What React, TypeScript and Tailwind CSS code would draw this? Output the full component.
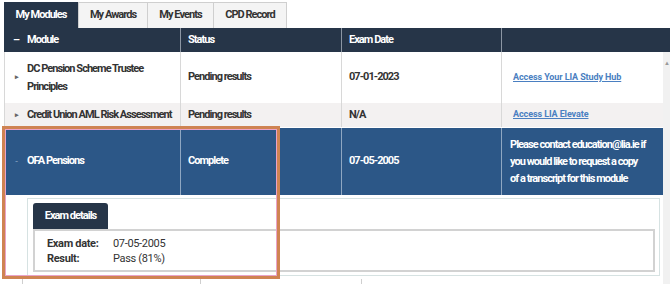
const font = { fontFamily: 'Roboto, "Liberation Sans", sans-serif' }

interface Row {
  module: string
  status: string
  date: string
  extra: string
}

const rows: Row[] = [
  { module: "DC Pension Scheme Trustee Principles", status: "Pending results", date: "07-01-2023", extra: "Access Your LIA Study Hub" },
  { module: "Credit Union AML Risk Assessment", status: "Pending results", date: "N/A", extra: "Access LIA Elevate" },
]

const App = () => {
  return (
    <div className="relative w-[670px] h-[284px] overflow-hidden bg-white text-[#333] tracking-[-0.06em]" style={font}>
      {/* tabs */}
      <div className="flex h-[28px] pt-[2px] pl-[4px] text-[11px] font-bold">
        <div className="w-[74px] bg-[#263548] text-white flex items-center justify-center">My Modules</div>
        <div className="w-[70px] bg-[#f4f4f4] border border-[#cfcfcf] border-b-0 flex items-center justify-center">My Awards</div>
        <div className="w-[66px] bg-[#f4f4f4] border border-[#cfcfcf] border-b-0 border-l-0 flex items-center justify-center">My Events</div>
        <div className="w-[73px] bg-[#f4f4f4] border border-[#cfcfcf] border-b-0 border-l-0 flex items-center justify-center">CPD Record</div>
      </div>

      {/* header */}
      <div className="flex h-[24px] ml-[4px] bg-[#263548] text-white text-[11px] font-bold">
        <div className="w-[177px] flex items-center pl-[9px] border-r border-[#8c96a3]">
          <span className="w-[14px]">–</span>Module
        </div>
        <div className="w-[161px] flex items-center pl-[7px] border-r border-[#8c96a3]">Status</div>
        <div className="w-[160px] flex items-center pl-[7px] border-r border-[#8c96a3]">Exam Date</div>
        <div className="flex-1" />
      </div>

      <div className="flex">
        <div className="w-[659px] ml-[4px]">
          {rows.map((r, i) => (
            <div
              key={r.module}
              className={`flex text-[11px] font-bold border-l border-[#d8d8d8] ${i === 0 ? "h-[51px] bg-white" : "h-[24px] bg-[#f3f1f1]"}`}
            >
              <div className="w-[176px] flex items-center border-r border-[#d8d8d8]">
                <span className="w-[22px] shrink-0 pl-[10px] text-[7px] text-[#666]">▸</span>
                <span className="w-[150px] leading-[18px]">{r.module}</span>
              </div>
              <div className="w-[161px] flex items-center pl-[7px] border-r border-[#d8d8d8]">{r.status}</div>
              <div className="w-[160px] flex items-center pl-[7px] border-r border-[#d8d8d8]">{r.date}</div>
              <div className="flex-1 flex items-center pl-[11px]">
                <span className="text-[9px] font-bold tracking-[-0.01em] text-[#4a7fc1] underline">{r.extra}</span>
              </div>
            </div>
          ))}

          {/* expanded row */}
          <div className="flex h-[67px] mt-[1px] bg-[#2c5787] text-white text-[11px] font-bold">
            <div className="w-[177px] flex items-center border-r border-[#8fa7c2]">
              <span className="w-[23px] pl-[11px] text-[8px] text-[#7f9cbd]">-</span>
              OFA Pensions
            </div>
            <div className="w-[161px] flex items-center pl-[7px] border-r border-[#8fa7c2]">Complete</div>
            <div className="w-[160px] flex items-center pl-[7px] border-r border-[#8fa7c2]">07-05-2005</div>
            <div className="flex-1 flex flex-col justify-center pl-[8px] leading-[17px] whitespace-nowrap">
              <span>Please contact education@lia.ie if</span>
              <span>you would like to request a copy</span>
              <span>of a transcript for this module</span>
            </div>
          </div>

          {/* detail */}
          <div className="pt-[3px] pl-[23px] pr-[3px] h-[84px]">
            <div className="border border-[#d6e2e2] h-[78px] pt-[4px] pl-[5px] pr-[4px]">
              <div className="w-[75px] h-[26px] bg-[#263548] rounded-t-[3px] text-white text-[11px] font-bold flex items-center justify-center">
                Exam details
              </div>
              <div className="border-2 border-[#d2d2d2] h-[43px] pl-[12px] pt-[5px] text-[11px] leading-[15px] tracking-[-0.03em]">
                <div className="flex">
                  <span className="w-[66px] font-bold">Exam date:</span>
                  <span>07-05-2005</span>
                </div>
                <div className="flex">
                  <span className="w-[66px] font-bold">Result:</span>
                  <span>Pass (81%)</span>
                </div>
              </div>
            </div>
          </div>
          <div className="flex h-[10px]">
            <div className="w-[18px]" />
            <div className="w-[178px] border-l border-[#cfcfcf]" />
            <div className="w-[161px] border-l border-[#cfcfcf]" />
            <div className="w-[160px] border-l border-[#cfcfcf]" />
          </div>
        </div>
        {/* scrollbar track */}
        <div className="w-[7px] bg-[#f1f1f1] relative">
          <span className="absolute top-[6px] left-[1px] text-[6px] text-[#999]">▲</span>
        </div>
      </div>

      {/* annotation highlight */}
      <div className="absolute left-[2px] top-[126px] w-[278px] h-[153px] border-[3px] border-[#cf8352] pointer-events-none">
        <div className="w-full h-full border border-[#e9a3c8]" />
      </div>
    </div>
  )
}

export default App
